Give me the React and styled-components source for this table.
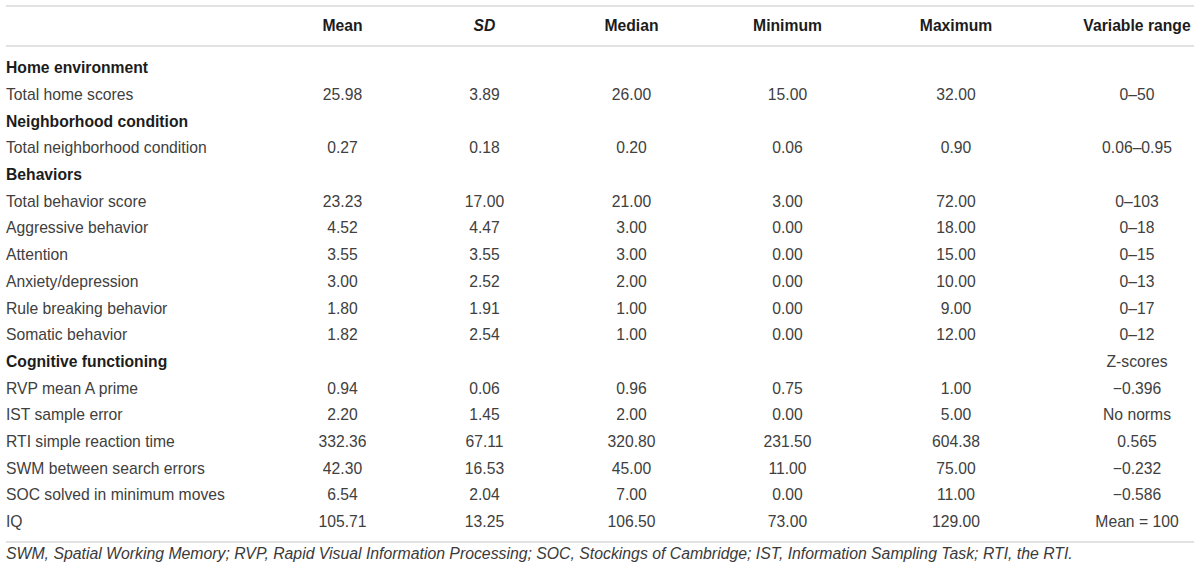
import styled, { createGlobalStyle } from "styled-components";

const GlobalStyle = createGlobalStyle`
  body {
    margin: 0;
    background: #ffffff;
    font-family: "Liberation Sans", Arial, sans-serif;
  }
`;

const Page = styled.div`
  padding: 5px 6px 0 6px;
  width: 1188px;
`;

const Table = styled.table`
  width: 1188px;
  border-collapse: collapse;
  table-layout: fixed;
  font-size: 15.7px;
  color: #404040;
`;

const HeadCell = styled.th`
  height: 38px;
  padding: 0;
  padding-left: ${(p) => (p.$pad ? p.$pad : 0)}px;
  border-top: 2px solid #e2e2e2;
  border-bottom: 2px solid #e2e2e2;
  font-weight: 700;
  font-style: ${(p) => (p.$italic ? "italic" : "normal")};
  color: #1c1c1c;
  text-align: center;
  vertical-align: middle;
`;

const Row = styled.tr`
  &:first-child td {
    padding-top: 8px;
  }
  &:last-child td {
    padding-bottom: 6px;
    border-bottom: 2px solid #e2e2e2;
  }
`;

const Cell = styled.td`
  height: 26.7px;
  padding: 0;
  padding-left: ${(p) => (p.$pad ? p.$pad : 0)}px;
  text-align: center;
  vertical-align: middle;
  white-space: nowrap;
`;

const LabelCell = styled(Cell)`
  text-align: left;
  font-weight: ${(p) => (p.$section ? 700 : 400)};
  color: ${(p) => (p.$section ? "#1c1c1c" : "#404040")};
`;

const Footnote = styled.p`
  margin: 1px 0 0 0;
  font-size: 15.8px;
  font-style: italic;
  color: #3a3a3a;
  line-height: 19px;
  white-space: nowrap;
`;

const widths = [266, 141, 143, 151, 161, 176, 150];

const headers = [
  { label: "" },
  { label: "Mean" },
  { label: "SD", italic: true },
  { label: "Median" },
  { label: "Minimum" },
  { label: "Maximum" },
  { label: "Variable range", pad: 36 },
];

const rows = [
  { section: "Home environment" },
  ["Total home scores", "25.98", "3.89", "26.00", "15.00", "32.00", "0–50"],
  { section: "Neighborhood condition" },
  ["Total neighborhood condition", "0.27", "0.18", "0.20", "0.06", "0.90", "0.06–0.95"],
  { section: "Behaviors" },
  ["Total behavior score", "23.23", "17.00", "21.00", "3.00", "72.00", "0–103"],
  ["Aggressive behavior", "4.52", "4.47", "3.00", "0.00", "18.00", "0–18"],
  ["Attention", "3.55", "3.55", "3.00", "0.00", "15.00", "0–15"],
  ["Anxiety/depression", "3.00", "2.52", "2.00", "0.00", "10.00", "0–13"],
  ["Rule breaking behavior", "1.80", "1.91", "1.00", "0.00", "9.00", "0–17"],
  ["Somatic behavior", "1.82", "2.54", "1.00", "0.00", "12.00", "0–12"],
  { section: "Cognitive functioning", extra: "Z-scores" },
  ["RVP mean A prime", "0.94", "0.06", "0.96", "0.75", "1.00", "−0.396"],
  ["IST sample error", "2.20", "1.45", "2.00", "0.00", "5.00", "No norms"],
  ["RTI simple reaction time", "332.36", "67.11", "320.80", "231.50", "604.38", "0.565"],
  ["SWM between search errors", "42.30", "16.53", "45.00", "11.00", "75.00", "−0.232"],
  ["SOC solved in minimum moves", "6.54", "2.04", "7.00", "0.00", "11.00", "−0.586"],
  ["IQ", "105.71", "13.25", "106.50", "73.00", "129.00", "Mean = 100"],
];

export default function App() {
  return (
    <Page>
      <GlobalStyle />
      <Table>
        <colgroup>
          {widths.map((w, i) => (
            <col key={i} style={{ width: w }} />
          ))}
        </colgroup>
        <thead>
          <tr>
            {headers.map((h, i) => (
              <HeadCell key={i} $italic={h.italic} $pad={h.pad}>
                {h.label}
              </HeadCell>
            ))}
          </tr>
        </thead>
        <tbody>
          {rows.map((r, i) =>
            r.section ? (
              <Row key={i}>
                <LabelCell $section>{r.section}</LabelCell>
                <Cell />
                <Cell />
                <Cell />
                <Cell />
                <Cell />
                <Cell $pad={36}>{r.extra || ""}</Cell>
              </Row>
            ) : (
              <Row key={i}>
                <LabelCell>{r[0]}</LabelCell>
                {r.slice(1).map((v, j) => (
                  <Cell key={j} $pad={j === 5 ? 36 : 0}>
                    {v}
                  </Cell>
                ))}
              </Row>
            )
          )}
        </tbody>
      </Table>
      <Footnote>
        SWM, Spatial Working Memory; RVP, Rapid Visual Information Processing; SOC, Stockings of
        Cambridge; IST, Information Sampling Task; RTI, the RTI.
      </Footnote>
    </Page>
  );
}
